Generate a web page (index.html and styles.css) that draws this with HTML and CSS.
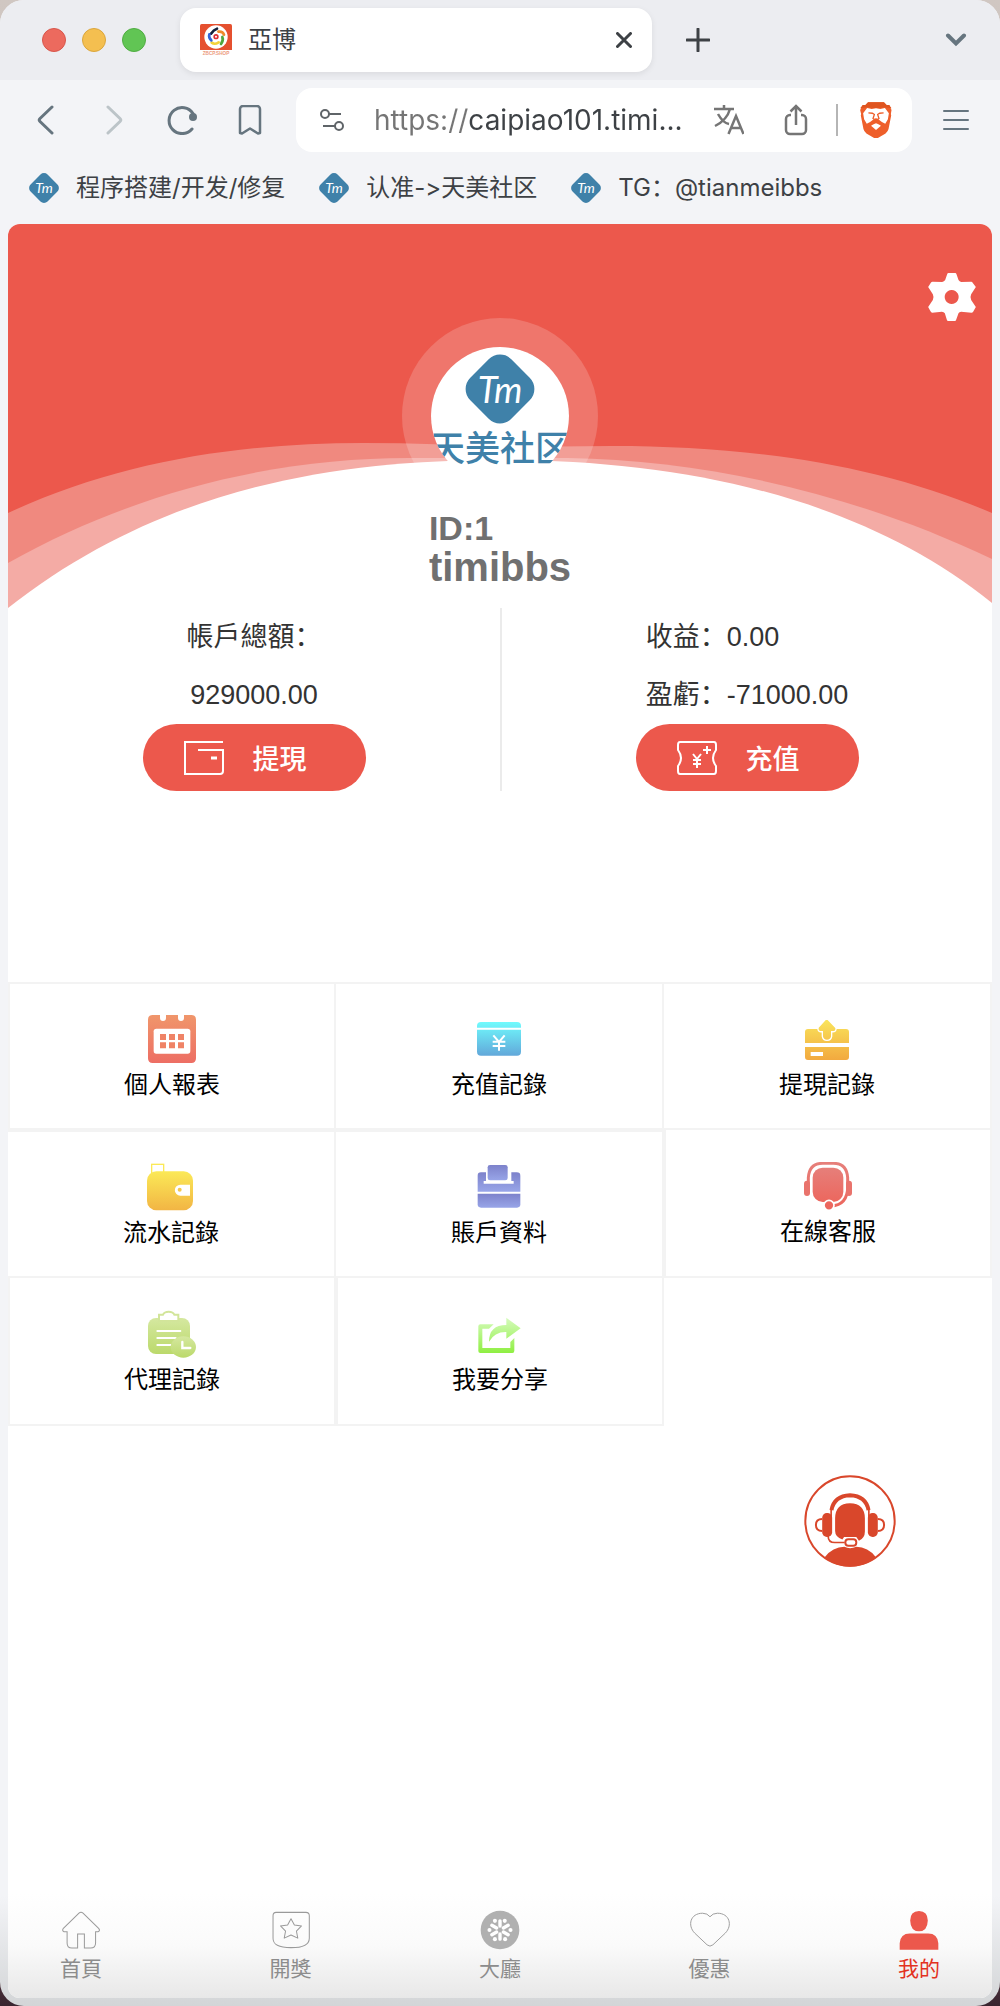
FILE: index.html
```html
<!DOCTYPE html>
<html lang="zh-Hans">
<head>
<meta charset="utf-8">
<meta name="viewport" content="width=device-width, initial-scale=1">
<title>亞博</title>
<link rel="stylesheet" href="styles.css">
</head>
<body>
<svg class="defs" aria-hidden="true">
  <defs>
    <linearGradient id="g-coral" x2="0" y2="1"><stop stop-color="#f0966b"/><stop offset="1" stop-color="#ed6e64"/></linearGradient>
    <linearGradient id="g-cyan" x2="0" y2="1"><stop stop-color="#70fbfd"/><stop offset="1" stop-color="#62a8da"/></linearGradient>
    <linearGradient id="g-gold" gradientUnits="userSpaceOnUse" x1="0" y1="144" x2="0" y2="270"><stop stop-color="#fae75c"/><stop offset="1" stop-color="#f2a93f"/></linearGradient>
    <linearGradient id="g-yellow" x2="0" y2="1"><stop stop-color="#fbe957"/><stop offset="1" stop-color="#f2b544"/></linearGradient>
    <linearGradient id="g-violet" x2="0" y2="1"><stop stop-color="#7d82cb"/><stop offset="1" stop-color="#98a5e8"/></linearGradient>
    <linearGradient id="g-rose" x2="0" y2="1"><stop stop-color="#e67f7a"/><stop offset="1" stop-color="#ec675e"/></linearGradient>
    <linearGradient id="g-lime" x2="0" y2="1"><stop stop-color="#d5e8a0"/><stop offset="1" stop-color="#bbd96b"/></linearGradient>
    <linearGradient id="g-green" gradientUnits="userSpaceOnUse" x1="0" y1="320" x2="0" y2="426"><stop stop-color="#d6fbbd"/><stop offset="1" stop-color="#8fef42"/></linearGradient>
    <symbol id="tm" viewBox="0 0 30 30">
      <rect x="3" y="3" width="24" height="24" rx="5" transform="rotate(45 15 15)" fill="#3f81a9"/>
      <text x="15" y="20" text-anchor="middle" class="tm-text">Tm</text>
    </symbol>
  </defs>
</svg>

<div class="window">
  <header class="tabstrip">
    <div class="lights"><span class="light red"></span><span class="light amber"></span><span class="light green"></span></div>
    <div class="tab">
      <svg class="favicon" viewBox="0 0 96 96" aria-hidden="true">
        <rect width="96" height="96" rx="5" fill="#fff"/><path d="M0 78V5a5 5 0 0 1 5-5h86a5 5 0 0 1 5 5v73z" fill="#e5502f"/>
        <circle cx="48" cy="39" r="35" fill="#fff"/>
        <g fill="none" stroke-width="8" stroke-linecap="round">
          <path d="M33 29q8-12 18-15" stroke="#15203a"/><path d="M55 23q13-2 17 9" stroke="#ef8a2b"/><path d="M67 39q4 10-4 21" stroke="#4fa63d"/><path d="M56 55q-12 8-21 1" stroke="#f3d33b"/><path d="M34 49q-9-7-6-18" stroke="#3465d8"/>
        </g>
        <circle cx="48" cy="38" r="8" fill="#df2e35"/><circle cx="48" cy="38" r="3" fill="#fff"/>
        <text x="48" y="93" text-anchor="middle" class="favicon-text">ZBCP.SHOP</text>
      </svg>
      <span class="tab-title">亞博</span>
      <button class="icon-btn" aria-label="關閉分頁"><svg width="16" height="16" viewBox="0 0 16 16"><path d="M1.500 1.500l13 13M14.500 1.500l-13 13" stroke="#3d4145" stroke-width="3" stroke-linecap="round"/></svg></button>
    </div>
    <button class="icon-btn" aria-label="新分頁"><svg width="24" height="24" viewBox="0 0 24 24"><path d="M12 1v22M1 12h22" stroke="#3d4145" stroke-width="3" stroke-linecap="round"/></svg></button>
    <button class="icon-btn push" aria-label="分頁清單"><svg width="22" height="14" viewBox="0 0 22 14" fill="none"><path d="M3 2.500l8 8 8-8" stroke="#66757f" stroke-width="4" stroke-linecap="round"/></svg></button>
  </header>

  <nav class="toolbar" aria-label="工具列">
    <div class="tools">
      <button class="icon-btn" aria-label="上一頁"><svg width="30" height="30" viewBox="0 0 30 30" fill="none"><path d="M21 2L9 13.500q-1.500 1.500 0 3L21 28" stroke="#66757f" stroke-width="3" stroke-linecap="round"/></svg></button>
      <button class="icon-btn" aria-label="下一頁"><svg width="30" height="30" viewBox="0 0 30 30" fill="none"><path d="M9 2l12 11.500q1.500 1.500 0 3L9 28" stroke="#bcc4c8" stroke-width="3" stroke-linecap="round"/></svg></button>
      <button class="icon-btn" aria-label="重新載入"><svg width="30" height="30" viewBox="0 0 30 30" fill="none"><path d="M26 8.500A13 13 0 1 0 25 24" stroke="#66757f" stroke-width="3" stroke-linecap="round"/><circle cx="26" cy="12" r="4" fill="#66757f"/></svg></button>
      <button class="icon-btn" aria-label="書籤"><svg width="30" height="30" viewBox="0 0 30 30" fill="none"><path d="M5 4a3 3 0 0 1 3-3h14a3 3 0 0 1 3 3v24l-2 .5-8-5-8 5-2-.5z" stroke="#66757f" stroke-width="2.500" stroke-linejoin="round"/></svg></button>
    </div>
    <div class="omnibox">
      <svg width="24" height="24" viewBox="0 0 24 24" fill="none" stroke="#5f6468" stroke-width="2" aria-hidden="true"><circle cx="5" cy="6" r="4"/><path d="M9 6h12M3 18h12"/><circle cx="19" cy="18" r="4"/></svg>
      <input class="url" type="text" aria-label="網址" value="https://caipiao101.timi...">
      <button class="icon-btn" aria-label="翻譯"><svg width="30" height="30" viewBox="0 0 30 30" fill="none" stroke="#757575" stroke-width="2.500"><path d="M0 4h20M10 0v4M4 9q5 9 11 10M16 4Q13 15 1 21M14.500 29L22 11l7.500 18M17 23h10"/></svg></button>
      <button class="icon-btn" aria-label="分享"><svg width="24" height="32" viewBox="0 0 24 32" fill="none" stroke="#757575" stroke-width="2.500"><path d="M7 11H6a4 4 0 0 0-4 4v11a4 4 0 0 0 4 4h12a4 4 0 0 0 4-4V15a4 4 0 0 0-4-4h-1M12 21V2M6.500 7.500L12 2l5.500 5.500"/></svg></button>
      <span class="bar"></span>
      <button class="icon-btn" aria-label="Brave Shields"><svg width="32" height="36" viewBox="1080 305 96 109"><path d="M1104 306h48l8 8h8l7 15-2 12 1 5-8 41q-2 8-9 13l-22 13q-7 3-14 0l-22-13q-7-5-9-13l-8-41 1-5-3-12 8-15h8z" fill="#ee5f2b"/><path d="M1104 306h48l8 8h8l7 10-20-3-27 3-27-3-21 3 8-10h8z" fill="#df541f"/><path d="M1101 323l14 3 13-2 13 2 14-3 12 16-3 18-8 14q-12-6-21-14-4-3-7-3t-7 3q-9 8-21 14l-8-14-3-18z" fill="#fff"/><path d="M1128 369q7 2 15 8l-15 13-15-13q8-6 15-8z" fill="#fff"/><path d="M1105 338l12 1 6 4-4 12 9 6 9-6-4-12 6-4 12-1" fill="none" stroke="#ee5f2b" stroke-width="4"/></svg></button>
    </div>
    <button class="icon-btn" aria-label="選單"><svg width="26" height="22" viewBox="0 0 26 22"><path d="M1 2h24M1 11h24M1 20h24" stroke="#66757f" stroke-width="2" stroke-linecap="round"/></svg></button>
  </nav>

  <nav class="bookmarks" aria-label="書籤列">
    <a href="#"><svg width="30" height="30"><use href="#tm"/></svg>程序搭建/开发/修复</a>
    <a href="#"><svg width="30" height="30"><use href="#tm"/></svg>认准-&gt;天美社区</a>
    <a href="#"><svg width="30" height="30"><use href="#tm"/></svg>TG：@tianmeibbs</a>
  </nav>

  <main class="page">
    <section class="hero">
      <svg class="waves" viewBox="0 0 984 168" preserveAspectRatio="none" aria-hidden="true">
        <path d="M0 73C110 22 230 3 356 3Q430 3 492 8 540 6 604 6C740 6 870 24 984 73V168H0z" fill="#f0897f"/>
        <path d="M0 123C130 50 270 18 400 18H560C700 20 850 55 984 119V168H0z" fill="#f4aba5"/>
        <path d="M0 168C150 50 320 20 492 20C670 20 850 55 984 163V168z" fill="#fff"/>
      </svg>
      <button class="icon-btn gear" aria-label="設定"><svg width="48" height="48" viewBox="85 69 143 144"><path fill="#fff" fill-rule="evenodd" d="M146 69h20q3 0 4 4l6 17q3 5 8 6l30-1q3 0 5 4l9 12-14 22q-4 8 0 17l14 21-8 14q-2 3-5 3l-31-3q-6 1-8 5l-7 19q-1 4-4 4h-20q-3 0-4-4l-6-19q-3-5-9-5l-29 3q-3 0-5-4l-7-13 14-21q4-9 0-17L85 111l8-13q2-3 5-3l29 1q6-1 9-6l6-17q1-4 4-4zM155 120a21 21 0 1 0 1 0z"/></svg></button>
      <svg class="avatar" viewBox="0 0 138 138" role="img" aria-label="天美社区">
        <rect width="138" height="138" fill="#fff"/>
        <rect x="40" y="13" width="58" height="58" rx="16" transform="rotate(45 69 42)" fill="#3f81a9"/>
        <text x="69" y="56" text-anchor="middle" class="avatar-tm">Tm</text>
        <text x="69" y="114" text-anchor="middle" class="avatar-name">天美社区</text>
      </svg>
      <div class="identity">
        <div class="uid">ID:1</div>
        <div class="uname">timibbs</div>
      </div>
    </section>

    <section class="stats">
      <div class="stat">
        <div class="centered">帳戶總額：<br>929000.00</div>
        <button class="pill"><svg width="40" height="34" viewBox="0 0 40 34" fill="none" stroke="#fff" stroke-width="2"><path d="M39 1H1v32h35q3 0 3-3V9H14"/><path d="M27 17h6" stroke-width="3"/></svg>提現</button>
      </div>
      <div class="stat">
        <div>收益：0.00<br>盈虧：-71000.00</div>
        <button class="pill"><svg width="40" height="34" viewBox="0 0 40 34" fill="none" stroke="#fff" stroke-width="2"><path d="M3 1h34q2 0 2 3v5q-6 8 0 16v5q0 3-2 3H3q-2 0-2-3v-5q6-8 0-16V4q0-3 2-3z"/><path d="M16 13l4 5 4-5M20 18v9M16 19h8M16 23h8M26 9h8M30 5v8"/></svg>充值</button>
      </div>
    </section>

    <nav class="menu" aria-label="功能">
      <a class="edge-top edge-left" href="#"><svg viewBox="444 135 144 144"><path fill="url(#g-coral)" d="M458 135h22v9a9 9 0 0 0 18 0v-9h36v9a9 9 0 0 0 18 0v-9h22q14 0 14 14v116q0 14-14 14H458q-14 0-14-14V149q0-14 14-14z"/><rect x="461" y="176" width="110" height="75" rx="8" fill="#fff"/><path fill="#ef8366" d="M480 192h18v18h-18zM507 192h18v18h-18zM534 192h18v18h-18zM480 217h18v18h-18zM507 217h18v18h-18zM534 217h18v18h-18z"/></svg>個人報表</a>
      <a class="edge-top" href="#"><svg viewBox="0 0 144 144"><rect x="6" y="21" width="132" height="101" rx="12" fill="url(#g-cyan)"/><path d="M6 41h132M55 61l17 20 17-20M72 80v27M53 80h38M53 93h38" fill="none" stroke="#fff" stroke-width="6"/></svg>充值記錄</a>
      <a class="edge-top" href="#"><svg viewBox="909 135 144 144"><path fill="url(#g-gold)" d="M924 177h114q9 0 9 9v33H915v-33q0-9 9-9zM915 231h132v30q0 9-9 9H924q-9 0-9-9z"/><path d="M980 144l28 29q2 14-13 12v14q-2 12-14 12t-14-12v-14q-15 2-13-12z" fill="url(#g-gold)" stroke="#fff" stroke-width="4"/><path d="M932 246h37v12h-37z" fill="#fff"/></svg>提現記錄</a>
      <a class="edge-top-inner" href="#"><svg viewBox="444 580 144 144"><rect x="458" y="584" width="36" height="30" fill="none" stroke="#fbe957" stroke-width="4"/><rect x="444" y="605" width="138" height="117" rx="28" fill="url(#g-yellow)"/><path d="M544 645h29v33h-29a16 16 0 0 1 0-33z" fill="#fff"/><circle cx="542" cy="660" r="6" fill="#f5c94d"/></svg>流水記錄</a>
      <a class="edge-top-inner" href="#"><svg viewBox="1429 580 144 144"><path fill="url(#g-violet)" d="M1447 608h15v26h-7v8h90v-8h-7v-26h16q11 0 11 10v48h-128v-48q0-10 10-10z"/><rect x="1467" y="586" width="60" height="46" rx="7" fill="url(#g-violet)"/><path fill="url(#g-violet)" d="M1437 672h128v32q0 10-10 10h-108q-10 0-10-10z"/></svg>賬戶資料</a>
      <a class="edge-left" href="#"><svg viewBox="912 576 144 144"><path d="M925 645v-22q3-43 43-43h32q40 0 43 43v22q2 60-50 63" fill="none" stroke="url(#g-rose)" stroke-width="9"/><rect x="938" y="593" width="92" height="103" rx="30" fill="url(#g-rose)"/><rect x="912" y="632" width="18" height="46" rx="9" fill="#e9736c"/><rect x="1038" y="632" width="18" height="46" rx="9" fill="#e9736c"/><circle cx="987" cy="706" r="15" fill="#ec675e" stroke="#fff" stroke-width="5"/></svg>在線客服</a>
      <a class="edge-left" href="#"><svg viewBox="444 297 144 144"><rect x="444" y="321" width="126" height="108" rx="24" fill="url(#g-lime)"/><path d="M477 330v-19h12q4-9 17-9t17 9h12v19z" fill="#fff" stroke="#d2e59a" stroke-width="6"/><path d="M472 360h69M472 381h55M472 402h40" stroke="#fff" stroke-width="6" stroke-linecap="round"/><ellipse cx="550" cy="408" rx="38" ry="32" fill="url(#g-lime)"/><path d="M547 393v18h24" fill="none" stroke="#fff" stroke-width="7" stroke-linecap="round"/></svg>代理記錄</a>
      <a class="edge-left" href="#"><svg viewBox="1430 297 144 144"><path fill="url(#g-green)" d="M1437 346q0-6 6-6h40l-14 13h-20v58h84v-18l12-12v38q0 7-6 7h-96q-6 0-6-6zM1469 392q0-50 52-50v-22l43 32-43 31v-20q-35-1-52 29z"/></svg>我要分享</a>
    </nav>

    <a class="service" href="#" aria-label="客服"><svg viewBox="912 794 276 278"><circle cx="1050" cy="933" r="135" fill="#fff" stroke="#d9472b" stroke-width="6"/><path d="M973 1043q25-32 60-32 17 9 36 0 35 0 60 32-35 28-79 28t-77-28z" fill="#d9472b"/><path d="M1005 925q0-45 45-46 45 1 45 46v40q0 20-18 28l-8-12h-37l-5 8q-22-8-22-26z" fill="#d9472b"/><g fill="none" stroke="#d9472b"><path d="M994 900q8-43 56-45 48 2 56 45" stroke-width="12"/><path d="M993 895v30M1107 895v30" stroke-width="5"/><path d="M966 927q-19 0-19 18t19 18M1134 927q19 0 19 18t-19 18" stroke-width="6"/><path d="M984 978q0 20 20 20h30" stroke-width="5"/></g><rect x="966" y="909" width="30" height="72" rx="14" fill="#d9472b"/><rect x="1104" y="909" width="30" height="72" rx="14" fill="#d9472b"/><rect x="1036" y="988" width="33" height="20" rx="9" fill="#fff" stroke="#d9472b" stroke-width="6"/></svg></a>

    <nav class="tabs" aria-label="主選單">
      <a href="#"><svg viewBox="184 91 118 118" fill="none" stroke="#9a9a9a" stroke-width="3"><path d="M237 100q6-5 12 0l46 45q6 7-2 10h-7v33q0 15-15 15h-18v-41h-20v41h-17q-14 0-14-15v-33h-9q-7-3-2-10z"/></svg>首頁</a>
      <a href="#"><svg viewBox="812 91 118 118" fill="none" stroke="#9a9a9a" stroke-width="3"><path d="M827 98h88q10 0 10 10v66q0 28-54 28t-53-28v-66q0-10 9-10z"/><path d="M871 117l10 18 21 3-15 15 4 21-20-9-20 9 4-21-15-15 21-3z" stroke-linejoin="round"/></svg>開獎</a>
      <a href="#"><svg viewBox="0 0 118 118"><circle cx="59" cy="59" r="57" fill="#b0b0b0" /><g stroke="#fff" stroke-width="10" stroke-linecap="round"><path d="M59 47V32M69 53l14-8M69 65l14 8M59 71v15M49 65l-14 8M49 53l-14-8"/></g><g fill="#fff"><circle cx="73" cy="32" r="6"/><circle cx="90" cy="59" r="6"/><circle cx="74" cy="86" r="6"/><circle cx="44" cy="86" r="6"/><circle cx="28" cy="59" r="6"/><circle cx="44" cy="32" r="6"/></g></svg>大廳</a>
      <a href="#"><svg viewBox="567 88 124 124" fill="none" stroke="#9a9a9a" stroke-width="3"><path d="M629 109q8-11 23-11c38 0 48 38 24 62l-38 36q-9 8-18 0l-38-36c-24-24-14-62 24-62q15 0 23 11z"/></svg>優惠</a>
      <a class="active" href="#"><svg viewBox="1198 90 118 118" fill="#ec584c"><path d="M1257 93q26 1 26 28-1 32-26 32t-26-32q0-27 26-28zM1200 207v-19q2-29 30-29h54q28 0 30 29v19z"/></svg>我的</a>
    </nav>
  </main>
</div>
</body>
</html>
```
FILE: styles.css
```css
* { box-sizing: border-box; }

body {
  margin: 0;
  background: linear-gradient(#d0c7c2, #a87474 90%, #3a2530);
  font-family: "Liberation Sans", Arial, "Noto Sans CJK SC", sans-serif;
}

a { color: inherit; text-decoration: none; }

svg { display: block; flex: none; }

.defs { position: absolute; width: 0; height: 0; }

.tm-text { font: italic 14px Lato, sans-serif; fill: #fff; }

.icon-btn {
  display: flex;
  flex: none;
  padding: 0;
  border: 0;
  background: none;
}

/* Browser window */
.window {
  display: flex;
  flex-direction: column;
  min-height: 100vh;
  padding-bottom: 8px;
  border-radius: 24px;
  overflow: hidden;
  background: linear-gradient(to top, #d3d5d7, #f3f4f7 110px);
}

.tabstrip {
  display: flex;
  align-items: center;
  height: 80px;
  padding: 0 33px 0 42px;
  background: #ecedf1;
  font-family: Inter, "Noto Sans CJK SC", sans-serif;
}

.lights { display: flex; gap: 16px; margin-right: 34px; }
.light { width: 24px; height: 24px; border-radius: 50%; border: 1px solid; }
.red { background: #ec6a5e; border-color: #d8564b; }
.amber { background: #f4bf50; border-color: #dba63c; }
.green { background: #61c554; border-color: #50ad42; }

.tab {
  display: flex;
  align-items: center;
  width: 51%;
  height: 64px;
  margin-right: 34px;
  padding: 0 20px;
  border-radius: 16px;
  background: #fff;
  box-shadow: 0 2px 6px rgba(0, 0, 0, .08);
}
.favicon { width: 32px; height: 32px; }
.favicon-text { font: 700 14px "Liberation Sans", sans-serif; fill: #ec9a80; }
.tab-title { flex: 1; margin-left: 16px; font-size: 24px; line-height: 32px; color: #3d4145; }
.push { margin-left: auto; }

.toolbar {
  display: flex;
  align-items: center;
  height: 80px;
  padding: 0 31px;
}
.tools { display: flex; gap: 38px; margin-right: 31px; }

.omnibox {
  display: flex;
  flex: 1;
  align-items: center;
  min-width: 0;
  height: 64px;
  margin-right: 31px;
  padding: 0 20px 0 24px;
  border-radius: 16px;
  background: #fff;
}
.url {
  flex: 1;
  width: 100%;
  min-width: 0;
  height: 40px;
  margin: 0 20px 0 30px;
  padding: 0;
  border: 0;
  outline: 0;
  background: linear-gradient(to right, #757575 94px, #3d4145 94px) text;
  color: transparent;
  font: 28px Inter, "Noto Sans CJK SC", sans-serif;
}
.omnibox .icon-btn + .icon-btn { margin-left: 40px; }
.bar { flex: none; width: 2px; height: 32px; margin: 0 22px 0 28px; background: #b5b5b5; }

.bookmarks {
  display: flex;
  gap: 34px;
  height: 64px;
  padding: 12px 29px 0;
  font: 24px/32px Inter, "Noto Sans CJK SC", sans-serif;
  font-feature-settings: "calt" 0;
  color: #3d4145;
}
.bookmarks a { display: flex; align-items: center; gap: 17px; height: 32px; white-space: nowrap; }

/* Page */
.page {
  position: relative;
  display: flex;
  flex: 1;
  flex-direction: column;
  margin: 0 8px;
  border-radius: 12px;
  overflow: hidden;
  background: #fff;
}

.hero {
  position: relative;
  display: flex;
  flex-direction: column;
  align-items: center;
  padding: 49px 16px 21px;
  background: #ec584c;
}
.waves { position: absolute; left: 0; bottom: 0; width: 100%; height: 168px; }
.gear { align-self: flex-end; }
.avatar {
  position: relative;
  width: 138px;
  height: 138px;
  margin-top: 26px;
  border-radius: 50%;
  box-shadow: 0 0 0 29px rgba(255, 255, 255, .18);
}
.avatar-tm { font: italic 36px Lato, sans-serif; fill: #fff; }
.avatar-name { font: 500 35px "Noto Sans CJK SC", sans-serif; fill: #3f81a9; }
.identity { position: relative; margin-top: 25px; color: #707070; font-weight: 700; }
.uid { font-size: 34px; line-height: 37px; }
.uname { font-size: 40px; line-height: 40px; }

.stats {
  display: grid;
  grid-template-columns: 1fr 1fr;
  margin-bottom: 191px;
  color: #333;
  font-size: 27px;
  line-height: 58px;
}
.stat { display: flex; flex-direction: column; align-items: center; }
.stat + .stat { border-left: 2px solid #ebebeb; }
.centered { text-align: center; }
.pill {
  display: flex;
  align-items: center;
  gap: 29px;
  width: 223px;
  height: 67px;
  padding: 0 41px;
  border: 0;
  border-radius: 34px;
  background: #ec584c;
  color: #fff;
  font: 500 27px "Noto Sans CJK SC", sans-serif;
}

.menu { display: grid; grid-template-columns: repeat(3, 1fr); grid-auto-rows: 148px; }
.menu a {
  display: flex;
  flex-direction: column;
  align-items: center;
  justify-content: center;
  gap: 6px;
  padding-top: 4px;
  border: 0 solid #f3f3f3;
  border-width: 0 2px 2px 0;
  color: #000;
  font-size: 24px;
  line-height: 32px;
}
.menu svg { width: 48px; height: 48px; }
.menu .edge-top, .menu .edge-top-inner { border-top-width: 2px; }
.menu .edge-left { border-left-width: 2px; }

.service { position: absolute; right: 96px; bottom: 431px; }
.service svg { width: 92px; height: 92px; }

.tabs {
  display: flex;
  justify-content: space-between;
  margin-top: auto;
  padding: 16px 52px;
  background: linear-gradient(#fff, #fafafa 50%, #e8e8e8);
  color: #8c8c8c;
  font-size: 21px;
  line-height: 26px;
}
.tabs a { display: flex; flex-direction: column; align-items: center; gap: 6px; }
.tabs svg { width: 40px; height: 40px; }
.tabs .active { color: #e3321f; }
```
